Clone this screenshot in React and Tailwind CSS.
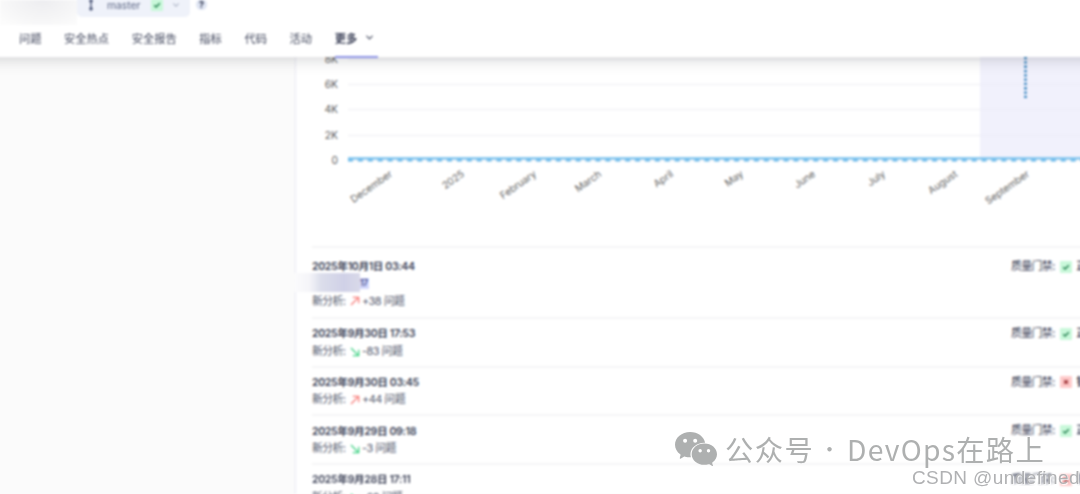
import { ChevronDown } from "lucide-react";
import { IoLogoWechat } from "react-icons/io5";

const navItems = ["问题", "安全热点", "安全报告", "指标", "代码", "活动"];

const yTicks = [
  { label: "8K", y: 2 },
  { label: "6K", y: 27 },
  { label: "4K", y: 52 },
  { label: "2K", y: 78 },
  { label: "0", y: 103 },
];

const months = [
  { label: "December", x: 97 },
  { label: "2025", x: 169 },
  { label: "February", x: 241 },
  { label: "March", x: 306 },
  { label: "April", x: 378 },
  { label: "May", x: 448 },
  { label: "June", x: 520 },
  { label: "July", x: 590 },
  { label: "August", x: 662 },
  { label: "September", x: 734 },
];

const analyses = [
  { date: "2025年10月1日 03:44", count: "+38", up: true, passed: true, version: "17" },
  { date: "2025年9月30日 17:53", count: "-83", up: false, passed: true },
  { date: "2025年9月30日 03:45", count: "+44", up: true, passed: false },
  { date: "2025年9月29日 09:18", count: "-3", up: false, passed: true },
  { date: "2025年9月28日 17:11", count: "-60", up: false, passed: false },
];

function GateIcon({ passed }) {
  return (
    <svg viewBox="0 0 12 12" className="w-3 h-3 shrink-0">
      <rect width="12" height="12" rx="1" fill={passed ? "#c9f8da" : "#fecaca"} />
      {passed
        ? <path d="M3.2 6.2 5.1 8 8.8 4.3" fill="none" stroke="#23804f" strokeWidth="1.5" />
        : <path d="m4.2 4.2 3.6 3.6m0-3.6L4.2 7.8" fill="none" stroke="#9c2f33" strokeWidth="1.6" />}
    </svg>
  );
}

function TrendIcon({ up }) {
  return (
    <svg viewBox="0 0 10 10" className="w-[10px] h-[10px] shrink-0" fill="none" strokeWidth="1.3">
      {up
        ? <path d="M1 9 8.7 1.3M2.8 1.3h5.9v5.9" stroke="#f87f7c" />
        : <path d="m1 1 7.7 7.7M2.8 8.7h5.9V2.8" stroke="#45d388" />}
    </svg>
  );
}

function Header() {
  return (
    <header className="relative z-10 -mx-5 -mt-5 h-[77px] bg-white px-5 pt-5 text-[#40465c] shadow-[0_3px_14px_rgba(55,60,65,0.2)]">
      <div className="flex h-[25px] items-start">
        <div className="h-[25px] w-[77px] bg-[radial-gradient(ellipse_at_55%_0%,#ededf0_0%,#f5f5f6_50%,#fcfcfc_90%)]" />
        <div className="-mt-2 flex h-[25px] w-[113px] items-start rounded-b-[5px] bg-[#eff2fa] pt-2">
          <svg viewBox="0 0 8 12" className="mt-[-1px] ml-[10px] h-3 w-2" stroke="#566080" fill="#566080">
            <path d="M4 2v8" strokeWidth="1.4" />
            <circle cx="4" cy="2" r="1.4" />
            <circle cx="4" cy="9.8" r="1.4" />
          </svg>
          <span className="ml-3 w-[43px] text-[10.3px] leading-[10px] text-[#5c6685]">master</span>
          <div className="ml-px -mt-[1px]"><GateIcon passed /></div>
          <ChevronDown className="ml-[8px] h-[10px] w-[10px] text-[#a0a8bb]" strokeWidth={2.5} />
        </div>
        <span className="-mt-[1px] ml-[6px] flex h-[11px] w-[11px] items-center justify-center rounded-full bg-[#dfe5f3] text-[9px] font-bold text-[#2e344c]">?</span>
      </div>
      <nav className="flex h-[33px] gap-[22.6px] pl-[19px] text-[11.25px] leading-[28px]">
        {navItems.map((item) => (
          <span key={item} className="whitespace-nowrap">{item}</span>
        ))}
        <span className="flex w-[43px] border-b-2 border-[#8c93e6] font-bold text-[#3b4057]">
          更多
          <ChevronDown className="ml-[7px] mt-[7px] h-[11px] w-[11px]" strokeWidth={2.2} />
        </span>
      </nav>
    </header>
  );
}

function HistoryChart() {
  return (
    <svg width="804" height="189" viewBox="0 0 804 189" className="block" fontSize="10.3">
      {yTicks.map((tick) => (
        <g key={tick.label}>
          <path d={`M52 ${tick.y}H804`} stroke="#f3f3f5" strokeWidth="1.3" transform="translate(0 .5)" />
          <text x="42" y={tick.y + 3.6} textAnchor="end" fill="#5c5c5c">{tick.label}</text>
        </g>
      ))}
      <rect x="684" width="120" height="102" fill="#e9e9fa" opacity=".65" />
      <path d="M729.5 0V41" stroke="#2f80bd" strokeWidth="2.6" strokeDasharray="2.3 2" />
      <path d="M52 101.4H804" stroke="#78c0ed" strokeWidth="2.4" />
      <path d="M52 103.4H804" stroke="#6bb9ea" strokeWidth="2.2" strokeDasharray="5 4.9" />
      {months.map((month) => (
        <text key={month.label} fontSize="10" textAnchor="end" fill="#666666" transform={`translate(${month.x} 118.6) rotate(-35)`} letterSpacing="-0.1">
          {month.label}
        </text>
      ))}
    </svg>
  );
}

function AnalysisRow({ item }) {
  return (
    <li className={`ml-4 flex shrink-0 border-t-2 border-[#f5f5f6] text-[10.9px] leading-[17.5px] text-[#505569] ${item.version ? "h-[71px] pt-[10px]" : "h-[48.7px] pt-[6.3px]"}`}>
      <div className="w-[699px] shrink-0 whitespace-nowrap">
        <p className="text-[10.6px] font-semibold tracking-[-0.36px] text-[#3a3f55]">{item.date}</p>
        {item.version && (
          <div className="-mt-[3px] mb-px -ml-[17px] flex h-[19px] items-center">
            <span className="h-[19px] w-[65px] bg-[linear-gradient(90deg,#fbfbfc_0%,#f5f5f9_22%,#dcdeeb_40%,#d0d1e7_75%,#d9d9e9_100%)]" />
            <span className="mt-[2px] h-[11px] w-[9px] bg-[#d2d6fb] text-[8.5px] leading-[11px] font-semibold tracking-[-0.3px] text-[#4c528f]">{item.version}</span>
          </div>
        )}
        <p className="flex items-center tracking-[-0.5px]">
          <span className="w-[38px] tracking-[-0.6px]">新分析:</span>
          <TrendIcon up={item.up} />
          <span className="ml-[2px]">{item.count} 问题</span>
        </p>
      </div>
      <div className="flex h-[17px] shrink-0 items-center whitespace-nowrap text-[#3d4258]">
        <span className="w-[48.5px] tracking-[-0.6px]">质量门禁:</span>
        <GateIcon passed={item.passed} />
        <span className="ml-[5px] font-semibold">{item.passed ? "正常" : "错误"}</span>
      </div>
    </li>
  );
}

function Watermarks() {
  return (
    <>
      <div className="absolute top-[427px] left-[675px] z-20 flex h-11 items-center whitespace-nowrap font-['Noto_Sans_CJK_SC',sans-serif] text-[28.3px] leading-[44px] text-[#aeb0b0]">
        <IoLogoWechat className="mr-[8px] h-[42px] w-[42px]" />
        <span className="w-[90px] tracking-[1.5px]">公众号</span>
        <span className="w-[33px] -ml-[2px] text-center font-['Inter',sans-serif] font-semibold">·</span>
        <span className="ml-px tracking-[1.25px]">DevOps在路上</span>
      </div>
      <div className="absolute top-[467px] left-[912px] z-20 whitespace-nowrap font-['Liberation_Sans',sans-serif] text-[19px] leading-[22px] tracking-[0.4px] text-[#b0b1b3] [text-shadow:1px_1px_1px_white]">
        CSDN @undefined
      </div>
    </>
  );
}

function App() {
  return (
    <div className="relative h-[494px] w-[1080px] overflow-hidden bg-[#fbfbfb] font-[Inter,'Noto_Sans_CJK_SC',sans-serif]">
      {/* page content sits slightly out of focus behind the watermarks */}
      <div className="flow-root blur-[0.8px]">
        <Header />
        <main className="flex h-[437px]">
          <aside className="w-[295px] shrink-0" />
          <section className="w-[805px] shrink-0 border-l border-[#e9e9f3] bg-white">
            <HistoryChart />
            <ul className="flex flex-col">
              {analyses.map((item) => (
                <AnalysisRow key={item.date} item={item} />
              ))}
            </ul>
          </section>
        </main>
      </div>
      <Watermarks />
    </div>
  );
}

export default App;
